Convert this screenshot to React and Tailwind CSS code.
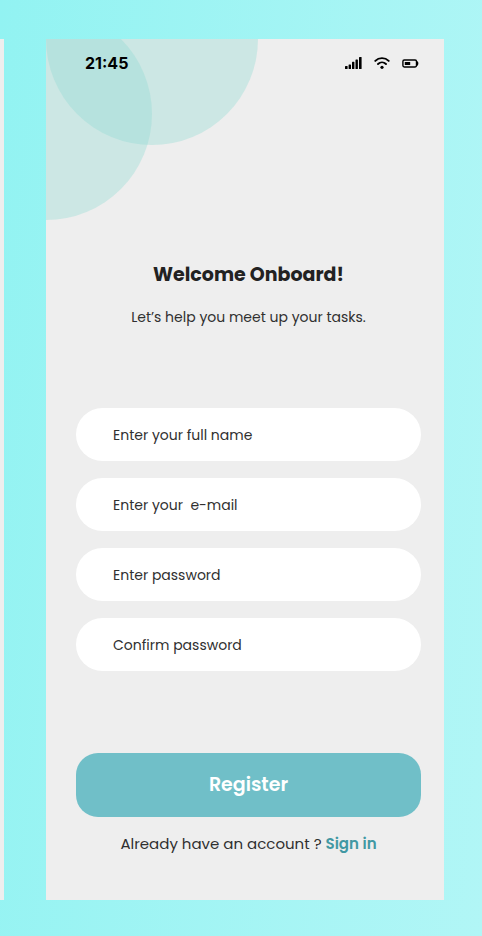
const fields = [
  { id: 'name', type: 'text', label: 'Enter your full name' },
  { id: 'email', type: 'email', label: 'Enter your \u00a0e-mail' },
  { id: 'password', type: 'password', label: 'Enter password' },
  { id: 'confirm', type: 'password', label: 'Confirm password' },
];

function SignalIcon() {
  return (
    <svg className="h-3 w-[17px]" viewBox="0 0 17 12" fill="currentColor" aria-hidden="true">
      <rect x="0" y="9" width="2.6" height="3" rx="0.6" />
      <rect x="3.6" y="7.4" width="2.4" height="4.6" rx="0.6" />
      <rect x="7" y="4.8" width="2.4" height="7.2" rx="0.6" />
      <rect x="10.5" y="2.4" width="2.4" height="9.6" rx="0.6" />
      <rect x="14" y="0" width="2.6" height="12" rx="0.6" />
    </svg>
  );
}

function WifiIcon() {
  return (
    <svg className="h-3 w-4" viewBox="0 0 16 12" fill="none" stroke="currentColor" strokeWidth="1.9" strokeLinecap="round" aria-hidden="true">
      <path d="M1.3 3.9C5 0.2 11 0.2 14.7 3.9" />
      <path d="M4 7C6.3 4.8 9.7 4.8 12 7" />
      <circle cx="8" cy="10.3" r="1.6" fill="currentColor" stroke="none" />
    </svg>
  );
}

function BatteryIcon() {
  return (
    <svg className="h-[9px] w-[17px]" viewBox="0 0 17 9" fill="none" aria-hidden="true">
      <rect x="0.9" y="1" width="13.6" height="7" rx="1.4" stroke="currentColor" strokeWidth="1.4" />
      <rect x="2.8" y="3" width="5.4" height="3" fill="currentColor" />
      <path d="M14.4 1.8C17 2.4 17 6.6 14.4 7.2Z" fill="currentColor" />
    </svg>
  );
}

export default function App() {
  return (
    <div className="flex min-h-screen bg-linear-95 from-[#92f3f2] to-[#b1f6f6] pt-[39px] pr-[38px] pb-9 font-[Poppins,Inter,sans-serif] text-[#303030]">
      <div className="w-1 shrink-0 bg-[#eeeeee]" />
      <main className="relative ml-[42px] flex-1 overflow-hidden bg-[#eeeeee] pr-[23px] pb-11 pl-[30px]">
        <div className="absolute top-[-106px] left-0 size-[212px] rounded-full bg-[rgba(143,220,212,0.36)]" />
        <div className="absolute top-[-31px] left-[-106px] size-[212px] rounded-full bg-[rgba(143,220,212,0.36)]" />

        <header className="relative flex h-12 items-center justify-between pl-[9px] text-black">
          <span className="font-[Inter,sans-serif] text-base font-bold">21:45</span>
          <div className="flex items-center gap-3 pr-[2px]">
            <SignalIcon />
            <WifiIcon />
            <BatteryIcon />
          </div>
        </header>

        <h1 className="mt-[174px] text-center text-[19px] leading-7 font-bold text-[#222222]">Welcome Onboard!</h1>
        <p className="mt-4 text-center text-sm leading-6">Let’s help you meet up your tasks.</p>

        <form className="mt-[79px]" onSubmit={(e) => e.preventDefault()}>
          <div className="flex flex-col gap-[17px]">
            {fields.map((f) => (
              <input
                key={f.id}
                id={f.id}
                type={f.type}
                aria-label={f.label}
                placeholder={f.label}
                className="h-[53px] w-full rounded-[27px] bg-white px-[37px] pt-[2px] text-sm placeholder:text-[#303030]"
              />
            ))}
          </div>
          <button type="submit" className="mt-[82px] h-16 w-full rounded-[22px] bg-[#70bfc8] text-[19px] font-semibold text-white">
            Register
          </button>
        </form>

        <p className="mt-[15px] text-center text-[15px] leading-6">
          Already have an account ?{' '}
          <a href="#signin" className="font-semibold text-[#4198a3]">Sign in</a>
        </p>
      </main>
    </div>
  );
}
